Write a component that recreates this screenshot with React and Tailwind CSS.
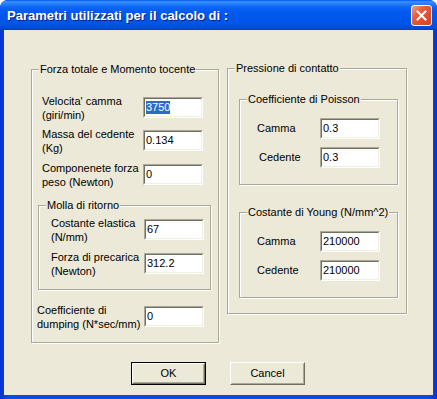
import React from "react";

const Input = ({ value, selected }) => (
  <div className="w-[60px] h-[21px] shrink-0 border border-t-[#ACA899] border-l-[#ACA899] border-b-white border-r-white">
    <div className="h-full border border-t-[#716F64] border-l-[#716F64] border-b-[#F1EFE2] border-r-[#F1EFE2] bg-white flex items-center pl-[1px] text-[11px] leading-[13px]">
      {selected ? <span className="bg-[#316AC5] text-white">{value}</span> : <span>{value}</span>}
    </div>
  </div>
);

const Group = ({ label, className, children }) => (
  <div className={"relative border border-[#ACA899] shadow-[inset_1px_1px_0_#fff,1px_1px_0_#fff] " + className}>
    <span className="absolute left-[7px] -top-[7px] bg-[#ECE9D8] px-[1px] leading-[13px] whitespace-nowrap">{label}</span>
    {children}
  </div>
);

const Row2 = ({ l1, l2, value, labelClass, className, selected }) => (
  <div className={"flex items-center h-[29px] " + className}>
    <div className={"leading-[14px] " + labelClass}>
      <div>{l1}</div>
      <div>{l2}</div>
    </div>
    <Input value={value} selected={selected} />
  </div>
);

const Row1 = ({ label, value, labelClass, className }) => (
  <div className={"flex items-center h-[21px] " + className}>
    <div className={"leading-[13px] " + labelClass}>{label}</div>
    <Input value={value} />
  </div>
);

const Button = ({ children, def }) =>
  def ? (
    <div className="w-[75px] h-[23px] border border-black">
      <div className="h-full border border-t-white border-l-white border-b-[#716F64] border-r-[#716F64]">
        <div className="h-full border border-t-[#ECE9D8] border-l-[#ECE9D8] border-b-[#ACA899] border-r-[#ACA899] flex items-center justify-center leading-[13px]">
          {children}
        </div>
      </div>
    </div>
  ) : (
    <div className="w-[75px] h-[23px] border border-t-white border-l-white border-b-[#716F64] border-r-[#716F64]">
      <div className="h-full border border-t-[#ECE9D8] border-l-[#ECE9D8] border-b-[#ACA899] border-r-[#ACA899] flex items-center justify-center leading-[13px]">
        {children}
      </div>
    </div>
  );

export default function App() {
  return (
    <div className="w-[437px] h-[399px] bg-white font-['Liberation_Sans',Arial,sans-serif] text-[11px] text-black">
      <div className="w-[437px] h-[399px] rounded-t-[8px] overflow-hidden flex flex-col bg-[linear-gradient(to_right,#0831D9,#0A4CE0_2%,#0A4CE0_98%,#0831D9)]">
        <div className="h-[30px] shrink-0 flex items-center justify-between pl-[7px] pr-[5px] bg-[linear-gradient(to_bottom,#0058EE_0%,#3A93FF_6%,#2880FF_12%,#0A64F5_25%,#0058EE_45%,#0055E8_80%,#0048D8_95%,#003DC0_100%)]">
          <span className="text-white font-bold text-[13px] leading-[16px] [text-shadow:1px_1px_0_#0A1F80] pt-[1px]">
            Parametri utilizzati per il calcolo di :
          </span>
          <div className="w-[21px] h-[21px] rounded-[3px] border border-white bg-[linear-gradient(135deg,#F0A088_0%,#E2603E_35%,#CC4520_100%)] flex items-center justify-center">
            <svg width="11" height="11" viewBox="0 0 11 11">
              <path d="M1.5 1.5 L9.5 9.5 M9.5 1.5 L1.5 9.5" stroke="white" strokeWidth="2" strokeLinecap="square" />
            </svg>
          </div>
        </div>
        <div className="mx-[4px] mb-[4px] flex-1 bg-[#ECE9D8] flex flex-col">
          <div className="flex items-start gap-[8px] ml-[27px] pt-[38px]">
            <Group label="Forza totale e Momento tocente" className="w-[188px] mt-[1px] pt-[23px] pl-[5px] pb-[11px] flex flex-col">
              <Row2 l1="Velocita' camma" l2="(giri/min)" value="3750" selected labelClass="w-[106px] pl-[5px]" />
              <Row2 l1="Massa del cedente" l2="(Kg)" value="0.134" labelClass="w-[106px] pl-[5px]" className="mt-[4px]" />
              <Row2 l1="Componenete forza" l2="peso (Newton)" value="0" labelClass="w-[106px] pl-[5px]" className="mt-[5px]" />
              <Group label="Molla di ritorno" className="w-[173px] ml-[1px] mt-[16px] pt-[9px] pb-[11px] pl-[12px] flex flex-col">
                <Row2 l1="Costante elastica" l2="(N/mm)" value="67" labelClass="w-[93px]" />
                <Row2 l1="Forza di precarica" l2="(Newton)" value="312.2" labelClass="w-[93px]" className="mt-[5px]" />
              </Group>
              <Row2 l1="Coefficiente di" l2="dumping (N*sec/mm)" value="0" labelClass="w-[107px]" className="mt-[12px]" />
            </Group>
            <Group label="Pressione di contatto" className="w-[180px] pt-[30px] pl-[11px] pb-[15px] flex flex-col">
              <Group label="Coefficiente di Poisson" className="w-[159px] pt-[18px] pb-[16px] flex flex-col">
                <Row1 label="Camma" value="0.3" labelClass="w-[80px] pl-[17px]" />
                <Row1 label="Cedente" value="0.3" labelClass="w-[80px] pl-[19px]" className="mt-[8px]" />
              </Group>
              <Group label="Costante di Young (N/mm^2)" className="w-[159px] mt-[27px] pt-[18px] pb-[16px] flex flex-col">
                <Row1 label="Camma" value="210000" labelClass="w-[80px] pl-[17px]" />
                <Row1 label="Cedente" value="210000" labelClass="w-[80px] pl-[17px]" className="mt-[8px]" />
              </Group>
            </Group>
          </div>
          <div className="flex gap-[24px] ml-[127px] mt-[19px]">
            <Button def>OK</Button>
            <Button>Cancel</Button>
          </div>
        </div>
      </div>
    </div>
  );
}
